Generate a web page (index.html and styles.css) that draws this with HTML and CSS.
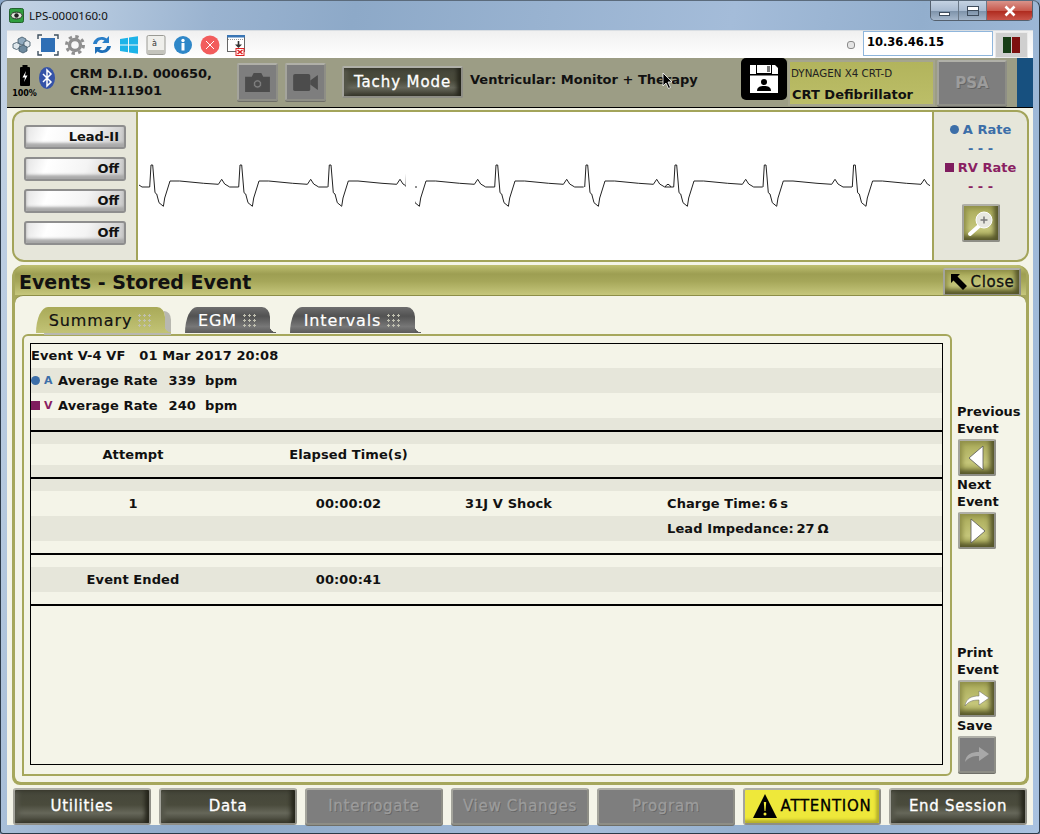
FILE: index.html
```html
<!DOCTYPE html>
<html lang="en">
<head>
    <meta charset="UTF-8">
    <title>LPS-0000160:0</title>
    <link rel="stylesheet" href="styles.css">
</head>
<body>

<div class="window">

    <div class="titlebar">
        <svg class="app-icon" viewBox="0 0 16 16">
            <rect x="0.5" y="0.5" width="15" height="15" rx="2" fill="#2f9e3f" stroke="#1c5a24"/>
            <ellipse cx="8" cy="8" rx="6" ry="3.6" fill="#dfe8dc" stroke="#222"/>
            <circle cx="8" cy="8" r="2.4" fill="#222"/>
        </svg>
        <span class="app-title">LPS-0000160:0</span>
        <div class="win-controls">
            <div class="win-btn min"><i></i></div>
            <div class="win-btn max"><i></i></div>
            <div class="win-btn close">
                <svg viewBox="0 0 12 12" width="12" height="12"><path d="M1.5 1.5 10.5 10.5M10.5 1.5 1.5 10.5" stroke="#fff" stroke-width="2.6" fill="none"/></svg>
            </div>
        </div>
    </div>

    <div class="toolbar">
        <svg class="tool" viewBox="0 0 22 22">
            <path d="M8 5 12 3 16 5 16 9 12 11 8 9Z" fill="#8fa9bd" stroke="#3d5566" stroke-width="0.8"/>
            <path d="M14 8 17 6.500 20 8 20 12 17 13.500 14 12Z" fill="#dfe7ec" stroke="#3d5566" stroke-width="0.8"/>
            <path d="M3 10 6.500 8.500 10 10 10 14 6.500 15.500 3 14Z" fill="#dfe7ec" stroke="#3d5566" stroke-width="0.8"/>
            <path d="M9 13 13 11 17 13 17 17 13 19 9 17Z" fill="#6e8a9e" stroke="#3d5566" stroke-width="0.8"/>
        </svg>
        <svg class="tool" viewBox="0 0 22 22">
            <rect x="4" y="4" width="14" height="14" fill="#2f6fb5"/>
            <path d="M1 5V1H5M17 1H21V5M21 17V21H17M5 21H1V17" fill="none" stroke="#3d4f5e" stroke-width="1.4"/>
        </svg>
        <svg class="tool" viewBox="0 0 22 22">
            <circle cx="11" cy="11" r="5.500" fill="none" stroke="#8f8f8f" stroke-width="3.400"/>
            <circle cx="11" cy="11" r="8.500" fill="none" stroke="#8f8f8f" stroke-width="3" stroke-dasharray="3.340 3.340"/>
        </svg>
        <svg class="tool" viewBox="0 0 22 22">
            <path d="M2 10C3 4 10 1 15.500 4.500L18 2V9H11L13.500 6.500C10 5 7 6 5.800 10Z" fill="#2a7fc9"/>
            <path d="M20 12C19 18 12 21 6.500 17.500L4 20V13H11L8.500 15.500C12 17 15 16 16.200 12Z" fill="#1e6fb8"/>
        </svg>
        <svg class="tool" viewBox="0 0 22 22">
            <path d="M2 5 10 3.800V10.500H2ZM11 3.600 20 2.300V10.500H11ZM2 11.500H10V18.200L2 17ZM11 11.500H20V19.700L11 18.400Z" fill="#1db3e8"/>
        </svg>
        <svg class="tool" viewBox="0 0 22 22">
            <rect x="2" y="1.500" width="18" height="19" rx="1.500" fill="#efefeb" stroke="#9a9a94"/>
            <rect x="2.500" y="16" width="17" height="4" fill="#c4c4bc"/>
            <text x="7" y="12" class="key-char">à</text>
        </svg>
        <svg class="tool" viewBox="0 0 22 22">
            <circle cx="11" cy="11" r="9" fill="#2f87c8"/>
            <rect x="9.500" y="9" width="3" height="7.500" fill="#fff"/>
            <circle cx="11" cy="6.500" r="1.700" fill="#fff"/>
        </svg>
        <svg class="tool" viewBox="0 0 22 22">
            <circle cx="11" cy="11" r="9.500" fill="#f25c5c"/>
            <path d="M7 7 15 15M15 7 7 15" stroke="#fff" stroke-width="1" fill="none"/>
        </svg>
        <svg class="tool" viewBox="0 0 22 22">
            <rect x="1.500" y="1.500" width="17" height="16" fill="#fff" stroke="#666"/>
            <rect x="1" y="1" width="18" height="2.500" fill="#3a76b5"/>
            <path d="M2 5.500H18" stroke="#999" stroke-dasharray="1 1"/>
            <path d="M12.500 7V11" stroke="#333" stroke-width="1.600"/>
            <path d="M9 10.500H16L12.500 14Z" fill="#333"/>
            <rect x="10" y="14.500" width="8" height="7" fill="#fff" stroke="#d22"/>
            <path d="M11.500 16 16.500 20M16.500 16 11.500 20" stroke="#d22" stroke-width="1.600"/>
        </svg>

        <span class="radio-dot"></span>
        <div class="ip-field">10.36.46.15</div>
        <div class="led-box"><i class="led-green"></i><i class="led-red"></i></div>
    </div>

    <div class="status">
        <div class="battery">
            <svg viewBox="0 0 12 22" width="12" height="22">
                <rect x="3.500" y="0" width="5" height="2" fill="#000"/>
                <rect x="1" y="2" width="10" height="19" rx="1" fill="#000"/>
                <path d="M7 6 3.500 12.500H6L5 17 8.500 10.500H6Z" fill="#fff"/>
            </svg>
            <span>100%</span>
        </div>
        <svg class="bluetooth" viewBox="0 0 16 22">
            <ellipse cx="8" cy="11" rx="8" ry="11" fill="#3553a8"/>
            <path d="M4 7 12 15 8 19V3L12 7 4 15" fill="none" stroke="#fff" stroke-width="1.500"/>
        </svg>
        <div class="device-id">CRM D.I.D. 000650,<br>CRM-111901</div>
        <div class="bevel media-btn">
            <svg viewBox="0 0 28 22" width="27" height="21">
                <path d="M1 5H8L10 1H18L20 5H27V21H1Z" fill="#4c4c4c"/>
                <circle cx="14" cy="12.500" r="4.500" fill="#7d7d7d" stroke="#4c4c4c"/>
                <circle cx="14" cy="12.500" r="2.500" fill="#4c4c4c"/>
            </svg>
        </div>
        <div class="bevel media-btn">
            <svg viewBox="0 0 28 20" width="27" height="19">
                <rect x="1" y="1" width="18" height="18" rx="2" fill="#4c4c4c"/>
                <path d="M19 8 27 2V18L19 12Z" fill="#4c4c4c"/>
            </svg>
        </div>
        <div class="bevel btn-dark tachy">Tachy Mode</div>
        <div class="therapy">Ventricular: Monitor + Therapy</div>
        <svg class="cursor" viewBox="0 0 12 18" width="12" height="18">
            <path d="M1 1V14L4 11 6.500 16.500 8.500 15.500 6 10H10Z" fill="#000" stroke="#fff" stroke-width="0.800"/>
        </svg>
        <div class="save-box">
            <svg viewBox="0 0 30 30" width="30" height="30">
                <path d="M1 1H26L29 4V29H1Z" fill="#fff"/>
                <rect x="7" y="1" width="16" height="9" fill="#000"/>
                <rect x="8" y="1" width="14" height="8" fill="#fff"/>
                <rect x="18" y="2" width="3" height="6" fill="#777"/>
                <rect x="1" y="10" width="28" height="1.500" fill="#000"/>
                <circle cx="15" cy="18" r="3" fill="#000"/>
                <path d="M8 27C8 23 11 22 15 22S22 23 22 27Z" fill="#000"/>
            </svg>
        </div>
        <div class="device-box">
            <div class="device-model">DYNAGEN X4 CRT-D</div>
            <div class="device-type">CRT Defibrillator</div>
        </div>
        <div class="bevel btn-off psa">PSA</div>
        <div class="status-end"></div>
    </div>

    <div class="content">

        <div class="ecg-panel">
            <div class="lead-col">
                <div class="lead-btn">Lead-II</div>
                <div class="lead-btn">Off</div>
                <div class="lead-btn">Off</div>
                <div class="lead-btn">Off</div>
            </div>
            <div class="ecg-trace">
                <svg viewBox="138 111 794 150" width="794" height="150">
                    <defs>
                        <path id="beat" d="M-2 186-.7 164 1 164 3.300 191.700 5 193 7.300 201.700 11.700 205.300 13 197 18.300 180 28 180 52 182.300 66.700 183.300 70 178.300 73 183 78 186 87 186"/>
                        <clipPath id="trace-clip">
                            <rect x="138" y="111" width="267.500" height="150"/>
                            <rect x="415" y="111" width="515" height="150"/>
                        </clipPath>
                    </defs>
                    <g class="trace-line" clip-path="url(#trace-clip)">
                        <path d="M139 184 142 186 149.700 186"/>
                        <use href="#beat" x="151.700"/>
                        <use href="#beat" x="240.700"/>
                        <use href="#beat" x="330"/>
                        <use href="#beat" x="407.700"/>
                        <use href="#beat" x="496.700"/>
                        <use href="#beat" x="586.700"/>
                        <use href="#beat" x="675.700"/>
                        <use href="#beat" x="765"/>
                        <use href="#beat" x="854.300"/>
                        <path d="M665 186 667 183.500 669 183.500 671 186"/>
                    </g>
                </svg>
            </div>
            <div class="rate-col">
                <div class="rate atrial"><i class="dot"></i>A Rate</div>
                <div class="rate atrial">- - -</div>
                <div class="rate ventr"><i class="square"></i>RV Rate</div>
                <div class="rate ventr">- - -</div>
                <div class="bevel btn-olive zoom-btn">
                    <svg viewBox="0 0 28 28" width="28" height="28">
                        <path d="M3 25 12 17" stroke="#fff" stroke-width="4" stroke-linecap="round"/>
                        <circle cx="17" cy="11" r="8" fill="#e8e8e0" stroke="#fff" stroke-width="1"/>
                        <path d="M13.500 11H20.500M17 7.500V14.500" stroke="#777" stroke-width="1.500"/>
                    </svg>
                </div>
            </div>
        </div>

        <div class="events">
            <div class="events-head">
                <h1>Events - Stored Event</h1>
                <div class="bevel btn-olive close-btn">
                    <svg viewBox="0 0 18 18" width="18" height="18">
                        <path d="M1 1H10L7.500 3.500 17 13 13 17 3.500 7.500 1 10Z" fill="#000"/>
                    </svg>
                    Close
                </div>
            </div>

            <div class="events-body">
                <div class="tabs">
                    <div class="tab on">Summary<i class="grip"></i></div>
                    <div class="tab egm">EGM<i class="grip"></i></div>
                    <div class="tab intervals">Intervals<i class="grip"></i></div>
                </div>

                <div class="main-row">
                    <div class="tab-panel">
                        <div class="log">
                            <div class="row first"><span class="head-line">Event V-4 VF&nbsp;&nbsp; 01 Mar 2017 20:08</span></div>
                            <div class="row dark rate-row">
                                <i class="dot"></i><b class="chan atrial">A</b>
                                <span class="rate-label">Average Rate</span><span class="rate-num">339</span><span>bpm</span>
                            </div>
                            <div class="row rate-row">
                                <i class="square"></i><b class="chan ventr">V</b>
                                <span class="rate-label">Average Rate</span><span class="rate-num">240</span><span>bpm</span>
                            </div>
                            <div class="row thin dark"></div>
                            <div class="rule"></div>
                            <div class="row thin dark"></div>
                            <div class="row cols short">
                                <span class="c1">Attempt</span><span class="c2">Elapsed Time(s)</span>
                            </div>
                            <div class="row thin dark"></div>
                            <div class="rule"></div>
                            <div class="row thin dark"></div>
                            <div class="row cols">
                                <span class="c1">1</span><span class="c2">00:00:02</span><span class="c3">31J V Shock</span><span class="c4">Charge Time:&thinsp;6&thinsp;s</span>
                            </div>
                            <div class="row cols dark"><span class="c4">Lead Impedance:&thinsp;27&thinsp;Ω</span></div>
                            <div class="row thin"></div>
                            <div class="rule"></div>
                            <div class="row thin"></div>
                            <div class="row cols dark">
                                <span class="c1">Event Ended</span><span class="c2">00:00:41</span>
                            </div>
                            <div class="row thin"></div>
                            <div class="rule"></div>
                        </div>
                    </div>

                    <div class="side-col">
                        <div class="side-label">Previous<br>Event</div>
                        <div class="bevel btn-olive side-btn">
                            <svg viewBox="0 0 20 26" width="20" height="26"><path d="M16 1V25L2 13Z" fill="#fff" stroke="#555" stroke-width="0.800"/></svg>
                        </div>
                        <div class="side-label next">Next<br>Event</div>
                        <div class="bevel btn-olive side-btn">
                            <svg viewBox="0 0 20 26" width="20" height="26"><path d="M4 1V25L18 13Z" fill="#fff" stroke="#555" stroke-width="0.800"/></svg>
                        </div>
                        <div class="side-label print">Print<br>Event</div>
                        <div class="bevel btn-olive side-btn">
                            <svg viewBox="0 0 26 20" width="26" height="20"><path d="M1 17C2 9 8 7 15 7V2L25 9 15 16V11C9 11 5 12 1 17Z" fill="#fff" stroke="#666" stroke-width="0.500"/></svg>
                        </div>
                        <div class="side-label next">Save</div>
                        <div class="bevel btn-off side-btn">
                            <svg viewBox="0 0 26 20" width="26" height="20"><path d="M1 17C2 9 8 7 15 7V2L25 9 15 16V11C9 11 5 12 1 17Z" fill="#a8a8a8"/></svg>
                        </div>
                    </div>
                </div>
            </div>
        </div>

        <div class="nav">
            <div class="bevel btn-dark">Utilities</div>
            <div class="bevel btn-dark">Data</div>
            <div class="bevel btn-off">Interrogate</div>
            <div class="bevel btn-off">View Changes</div>
            <div class="bevel btn-off">Program</div>
            <div class="bevel btn-attn">
                <svg viewBox="0 0 24 24" width="24" height="24">
                    <path d="M12 0 24 24H0Z" fill="#000"/>
                    <path d="M10.800 8H13.200L12.500 17H11.500Z" fill="#eee83a"/>
                    <circle cx="12" cy="20" r="1.500" fill="#eee83a"/>
                </svg>
                ATTENTION
            </div>
            <div class="bevel btn-dark">End Session</div>
        </div>
    </div>
</div>

</body>
</html>
```

FILE: styles.css
```css
* {
    box-sizing: border-box;
}
html, body {
    margin: 0;
    height: 100%;
}
body {
    font-family: "DejaVu Sans", sans-serif;
    font-size: 13px;
    font-weight: bold;
    color: #111;
    background: #8aa6c8;
}
i {
    display: block;
}

/* window frame */
.window {
    width: 1040px;
    height: 834px;
    display: flex;
    flex-direction: column;
    padding: 0 6px 8px;
    border: 1px solid #2c3a48;
    border-top-color: #5b6b7c;
    border-radius: 7px 7px 3px 3px;
    background: linear-gradient(100deg, #c4d3e4 0, #b4c8de 8%, #9ab3d0 18%, #8da9c8 30%, #a4bcd9 62%, #92aecd 78%, #a9c2e0 100%);
}
.titlebar {
    height: 29px;
    flex: none;
    display: flex;
    align-items: flex-start;
}
.app-icon {
    width: 15px;
    height: 15px;
    margin: 7px 0 0 2px;
}
.app-title {
    margin: 7px 0 0 5px;
    font: 11.5px "Noto Sans", sans-serif;
    color: #111;
}
.win-controls {
    margin: 0 0 0 auto;
    display: flex;
    height: 20px;
    width: 103px;
    border: 1px solid #54606e;
    border-top: 0;
    border-radius: 0 0 5px 5px;
    overflow: hidden;
}
.win-btn {
    display: flex;
    align-items: center;
    justify-content: center;
    background: linear-gradient(#c4d2e2, #a9bbd0 50%, #7f94ab 55%, #a5b7cb);
    border-right: 1px solid #6a7887;
    width: 28px;
}
.win-btn.close {
    flex: 1;
    border: 0;
    background: linear-gradient(#d9938a, #c85a4e 50%, #b02c20 55%, #c9554a);
}
.min i {
    width: 11px;
    height: 4px;
    margin-top: 6px;
    border: 1px solid #3e4c5c;
    background: #fff;
}
.max i {
    width: 12px;
    height: 10px;
    border: 1px solid #3e4c5c;
    background: linear-gradient(#fff 3px, #3e4c5c 3px, #3e4c5c 4px, transparent 4px);
}

/* toolbar */
.toolbar {
    height: 28px;
    flex: none;
    display: flex;
    align-items: center;
    gap: 5px;
    padding-left: 3px;
    background: linear-gradient(#f0f0f0, #fff);
    border-top: 1px solid #d8dde2;
}
.tool {
    width: 22px;
    height: 22px;
    flex: none;
}
.key-char {
    font: 8px "DejaVu Sans", sans-serif;
    fill: #333;
}
.radio-dot {
    width: 8px;
    height: 8px;
    margin: 0 3px 0 auto;
    border: 1px solid #8a8a8a;
    border-radius: 3px;
    background: #e4e4e4;
}
.ip-field {
    width: 130px;
    height: 25px;
    margin-top: -2px;
    padding: 3px 0 0 3px;
    background: #fff;
    border: 1px solid #8fb6dc;
    font-size: 11.5px;
    color: #000;
}
.led-box {
    width: 33px;
    height: 26px;
    margin: 0 5px 0 -3px;
    padding: 4px 5px;
    display: flex;
    gap: 1px;
    justify-content: center;
    background: #cfcfcf;
    border: 1px solid #eaeaea;
}
.led-green, .led-red {
    width: 8px;
    height: 16px;
}
.led-green { background: #173d17; }
.led-red { background: #7d1010; }

/* status strip */
.status {
    position: relative;
    height: 50px;
    flex: none;
    display: flex;
    align-items: flex-start;
    background: #9c9d85;
    border-bottom: 1px solid #000;
}
.battery {
    width: 27px;
    margin: 7px 0 0 4px;
    display: flex;
    flex-direction: column;
    align-items: center;
    font-size: 8px;
    line-height: 10px;
    color: #000;
}
.battery span {
    margin-top: 2px;
}
.bluetooth {
    width: 16px;
    height: 22px;
    margin: 9px 0 0 1px;
}
.device-id {
    margin: 7px 0 0 15px;
    width: 167px;
    line-height: 17px;
}
.media-btn {
    width: 41px;
    height: 38px;
    margin: 5px 7px 0 0;
    background: #7e7e7e;
}
.tachy {
    width: 121px;
    height: 32px;
    margin: 8px 0 0 9px;
    font-size: 15px;
    font-weight: normal;
    letter-spacing: 0.9px;
    -webkit-text-stroke: 0.3px;
}
.therapy {
    margin: 14px 0 0 7px;
    width: 271px;
}
.cursor {
    position: absolute;
    left: 655px;
    top: 14px;
}
.save-box {
    width: 46px;
    height: 42px;
    display: flex;
    align-items: center;
    justify-content: center;
    background: #000;
    border-radius: 5px;
}
.device-box {
    width: 147px;
    height: 46px;
    margin: 2px 0 0 1px;
    padding: 5px 1px 0;
    background: linear-gradient(#b2b45c, #bcbe68);
    border: 2px solid #a5a58e;
}
.device-model {
    font-size: 10.3px;
    font-weight: normal;
    color: #222;
}
.device-type {
    margin-top: 8px;
    padding-left: 1px;
}
.psa {
    width: 70px;
    height: 46px;
    margin: 2px 0 0 2px;
    font-size: 15px;
}
.status-end {
    width: 16px;
    height: 49px;
    margin-left: 10px;
    background: #17507f;
}

/* shared bevel buttons */
.bevel {
    display: flex;
    align-items: center;
    justify-content: center;
    border: 2px solid #8e8e86;
    border-top-color: #b0b0a8;
    border-left-color: #a4a49c;
    border-radius: 2px;
    box-shadow: 0 1px 0 #6f6f68;
}
.btn-dark {
    color: #fff;
    background: linear-gradient(#45463a, #4a4b3c 45%, #66675a 70%, #3a3a2e);
    box-shadow: inset -4px 0 4px #25251b, inset 4px 0 4px #55564a;
}
.btn-off {
    color: #9c9c9c;
    background: #7e7e7e;
    text-shadow: 1px 1px 0 #666;
}
.btn-olive {
    background: linear-gradient(#a9aa58, #c5c67a 65%, #a9aa58);
    box-shadow: inset -4px -4px 5px #55552a, inset 3px 3px 4px #94944c;
}
.btn-attn {
    gap: 4px;
    color: #000;
    background: #eee83a;
    box-shadow: inset -3px -3px 3px #b5b02a;
}

/* main content */
.content {
    flex: 1;
    min-height: 0;
    display: flex;
    flex-direction: column;
    padding: 2px 4px 0 5px;
    background: #f4f4e8;
}

/* ecg strip */
.ecg-panel {
    height: 152px;
    flex: none;
    display: flex;
    background: #e6e6da;
    border: 2px solid #a3a45a;
    border-radius: 12px;
    overflow: hidden;
}
.lead-col {
    width: 124px;
    flex: none;
    padding: 13px 0 0 10px;
    display: flex;
    flex-direction: column;
    gap: 8px;
    border-right: 2px solid #a3a45a;
}
.lead-btn {
    width: 102px;
    height: 24px;
    padding: 0 5px 1px 0;
    text-align: right;
    line-height: 20px;
    color: #111;
    background: linear-gradient(110deg, #e4e4e4, #fff 22%, #f4f4f4 60%, #c8c8c8);
    border: 2px solid #8e8e8e;
    border-radius: 3px;
    box-shadow: inset 0 -4px 3px #a8a8a8;
}
.ecg-trace {
    width: 794px;
    flex: none;
    background: #fff;
}
.ecg-trace svg {
    display: block;
}
.trace-line {
    fill: none;
    stroke: #222;
    stroke-width: 1;
}
.rate-col {
    flex: 1;
    padding-top: 8px;
    display: flex;
    flex-direction: column;
    align-items: center;
    border-left: 2px solid #a3a45a;
}
.rate {
    height: 19px;
    line-height: 19px;
    display: flex;
    align-items: center;
    gap: 4px;
}
.atrial { color: #3c6ea8; }
.ventr { color: #8a1f62; }
.dot {
    width: 9px;
    height: 9px;
    border-radius: 50%;
    background: #3c6ea8;
}
.square {
    width: 9px;
    height: 9px;
    background: #7f1d5e;
}
.zoom-btn {
    width: 38px;
    height: 38px;
    margin-top: 8px;
}

/* events panel */
.events {
    height: 520px;
    flex: none;
    margin-top: 3px;
    display: flex;
    flex-direction: column;
    border: 3px solid #a6a75c;
    border-top: 0;
    border-radius: 12px 12px 8px 8px;
    background: #a6a75c;
}
.events-head {
    height: 30px;
    flex: none;
    display: flex;
    align-items: center;
    justify-content: space-between;
    padding: 0 5px 0 4px;
    background: linear-gradient(#bfc072, #9d9e52 30%, #a6a75a 55%, #c6c77c);
    border-radius: 10px 10px 0 0;
}
.events-head h1 {
    margin: 3px 0 0;
    font-size: 19px;
    color: #111;
}
.close-btn {
    width: 78px;
    height: 28px;
    gap: 3px;
    margin-top: 4px;
    font-size: 15px;
    font-weight: normal;
    letter-spacing: 0.6px;
    -webkit-text-stroke: 0.3px;
    color: #111;
}
.events-body {
    flex: 1;
    min-height: 0;
    display: flex;
    flex-direction: column;
    background: #f4f4e8;
    border-top: 1px solid #8d8e48;
    border-radius: 8px 8px 6px 6px;
    padding: 11px 5px 6px 7px;
}
.tabs {
    height: 27px;
    flex: none;
    display: flex;
    padding-left: 14px;
}
.tab {
    position: relative;
    height: 26px;
    display: flex;
    align-items: center;
    justify-content: center;
    gap: 5px;
    font-size: 16px;
    font-weight: normal;
    letter-spacing: 0.9px;
    -webkit-text-stroke: 0.2px;
    color: #fff;
    border-radius: 12px 8px 0 0 / 26px 10px 0 0;
    background: linear-gradient(#6e6e6e, #525252 35%, #777 75%, #5b5b5b);
}
.tab::after {
    content: "";
    position: absolute;
    right: -6px;
    bottom: 0;
    width: 6px;
    height: 7px;
    background: radial-gradient(circle at 100% 0, transparent 6px, #5b5b5b 6.500px);
}
.tab.on {
    width: 129px;
    color: #111;
    background: linear-gradient(#a9aa58, #c2c376);
    box-shadow: 7px 3px 0 -1px #b8b8b0;
}
.tab.on::after {
    background: radial-gradient(circle at 100% 0, transparent 6px, #c2c376 6.500px);
}
.tab.egm {
    width: 85px;
    margin-left: 20px;
}
.tab.intervals {
    width: 125px;
    margin-left: 20px;
}
.grip {
    width: 15px;
    height: 15px;
    background-image: radial-gradient(circle, #c0c0b0 1.200px, transparent 1.400px);
    background-size: 5px 5px;
}
.main-row {
    flex: 1;
    min-height: 0;
    display: flex;
}
.tab-panel {
    width: 930px;
    height: 442px;
    flex: none;
    padding: 7px 7px 9px 6px;
    background: #f4f4e8;
    border: 2px solid #a6a75c;
    border-radius: 6px 6px 6px 0;
}
.log {
    height: 100%;
    border: 1px solid #000;
}

/* log rows */
.row {
    height: 25px;
    line-height: 25px;
    letter-spacing: 0.1px;
}
.row.first { height: 24px; line-height: 23px; }
.row.thin { height: 12px; }
.row.short { height: 21px; line-height: 21px; }
.dark { background: #e6e6da; }
.head-line {
    display: block;
    color: #111;
}
.rule {
    height: 2px;
    background: #000;
}
.rate-row {
    display: flex;
    align-items: center;
}
.chan {
    width: 18px;
    padding-left: 4px;
    font-size: 11px;
}
.rate-label {
    width: 100px;
}
.rate-num {
    width: 38px;
    margin-right: 9px;
    text-align: right;
}
.cols {
    display: grid;
    grid-template-columns: 204px 10px 207px 116px 99px 1fr;
}
.c1 {
    grid-column: 1;
    text-align: center;
}
.c2 {
    grid-column: 3;
    text-align: center;
}
.c3 {
    grid-column: 4;
    padding-left: 13px;
    white-space: nowrap;
}
.c4 {
    grid-column: 6;
    white-space: nowrap;
}

/* side column */
.side-col {
    flex: 1;
    padding: 69px 0 3px 5px;
    display: flex;
    flex-direction: column;
    align-items: flex-start;
}
.side-label {
    line-height: 17px;
    color: #111;
}
.side-label.print {
    margin-top: auto;
}
.side-btn {
    width: 38px;
    height: 37px;
    margin: 2px 0 0 1px;
}

/* bottom nav */
.nav {
    height: 37px;
    flex: none;
    margin-top: 3px;
    padding-left: 1px;
    display: grid;
    grid-template-columns: repeat(7, 138px);
    column-gap: 8px;
    font-size: 15px;
    font-weight: normal;
    letter-spacing: 0.7px;
    -webkit-text-stroke: 0.3px;
}
.nav .bevel {
    padding-bottom: 2px;
    border-radius: 3px;
}
```
